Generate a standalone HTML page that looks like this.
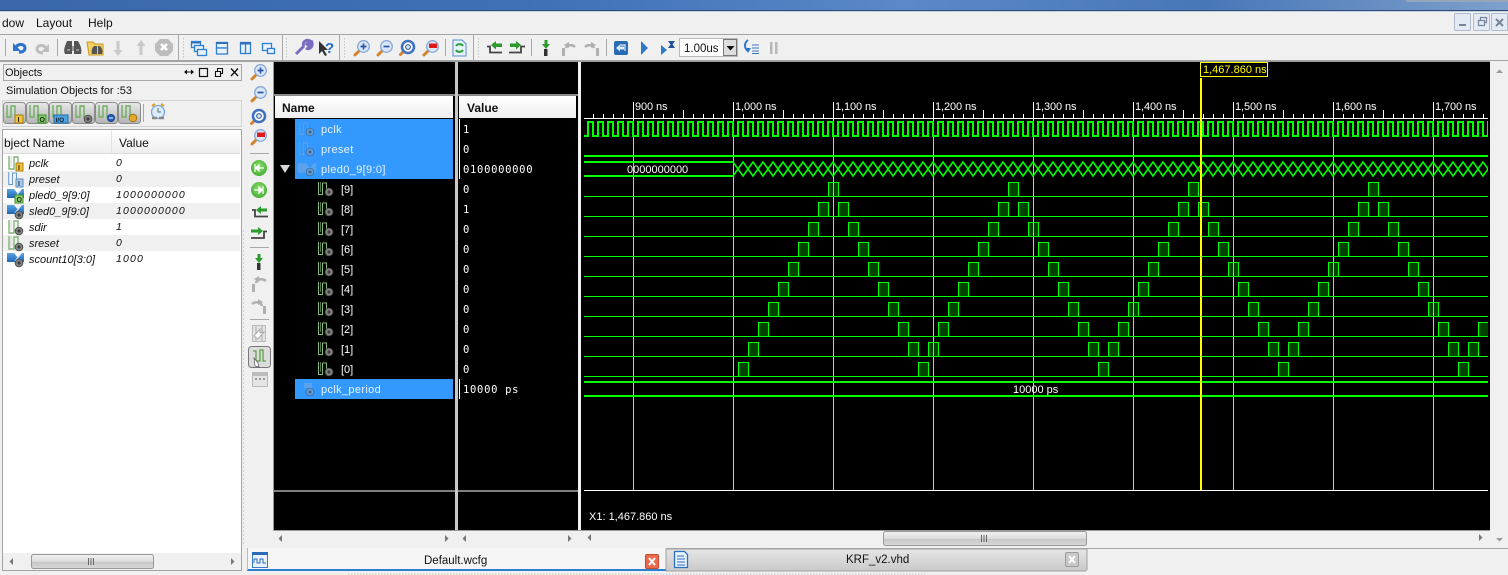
<!DOCTYPE html>
<html><head><meta charset="utf-8"><title>Default.wcfg</title>
<style>
html,body{margin:0;padding:0;background:#f0f0f0;width:1508px;height:575px;overflow:hidden}
svg{display:block;position:absolute;left:0;top:0}
text{font-family:"Liberation Sans",sans-serif;font-size:11px;white-space:pre}
.w{fill:#fff}
.rl{letter-spacing:-.1px}
.m{font-size:12px;fill:#111}
.k{fill:#111}
.nm{fill:#e8f2ff;letter-spacing:.35px}
.sub{fill:#fff}
.v{font-family:"DejaVu Sans Mono","Liberation Mono",monospace;font-size:10.5px;fill:#fff;letter-spacing:.7px}
.hd{font-weight:bold;font-size:12px;fill:#111}
.it{font-style:italic;fill:#111}
.iv{font-style:italic;font-size:10.5px;fill:#111;letter-spacing:1.15px}
.p{fill:rgba(0,255,0,.26);stroke:#0f0;stroke-width:1}
.b{stroke:#0f0;stroke-width:1;fill:none}
.t{stroke:#0f0;stroke-width:2;fill:none}
.g{fill:#c4c4c4}
.sep{stroke:#a8a8a8;stroke-width:1}
.ar{fill:#777}
</style></head><body>
<svg width="1508" height="575" viewBox="0 0 1508 575" xmlns="http://www.w3.org/2000/svg">
<defs>
<linearGradient id="tb" x1="0" x2="1" y1="0" y2="0"><stop offset="0" stop-color="#3a68aa"/><stop offset=".35" stop-color="#3f70b5"/><stop offset=".6" stop-color="#5a88c8"/><stop offset=".8" stop-color="#4877b8"/><stop offset="1" stop-color="#7da0cc"/></linearGradient>
<linearGradient id="hdr" x1="0" x2="0" y1="0" y2="1"><stop offset="0" stop-color="#fff"/><stop offset="1" stop-color="#eeeeee"/></linearGradient>
<linearGradient id="btn" x1="0" x2="0" y1="0" y2="1"><stop offset="0" stop-color="#e8e8e8"/><stop offset="1" stop-color="#b4b4b4"/></linearGradient>
<linearGradient id="thumb" x1="0" x2="0" y1="0" y2="1"><stop offset="0" stop-color="#f2f2f2"/><stop offset=".5" stop-color="#dcdcdc"/><stop offset=".55" stop-color="#c8c8c8"/><stop offset="1" stop-color="#d8d8d8"/></linearGradient>
<linearGradient id="tab2" x1="0" x2="0" y1="0" y2="1"><stop offset="0" stop-color="#e6e6e6"/><stop offset="1" stop-color="#c9c9c9"/></linearGradient>
<linearGradient id="blu" x1="0" x2="0" y1="0" y2="1"><stop offset="0" stop-color="#5aa4e4"/><stop offset="1" stop-color="#1e66b4"/></linearGradient>
<radialGradient id="gr" cx=".5" cy=".4" r=".7"><stop offset="0" stop-color="#8fe070"/><stop offset="1" stop-color="#3aa52a"/></radialGradient>
<pattern id="clk" patternUnits="userSpaceOnUse" x="585" y="119" width="10" height="20"><path d="M-1 17H3V3H8V17H11" class="t"/></pattern>
<pattern id="xx" patternUnits="userSpaceOnUse" x="733" y="160" width="10" height="18"><path d="M-1 .6L11 17.4M-1 17.4L11 .6" stroke="#0f0" stroke-width="1.600" fill="none"/></pattern>
<pattern id="tk" patternUnits="userSpaceOnUse" x="583" y="114" width="10" height="4"><rect width="1" height="4" fill="#fff"/></pattern>
<clipPath id="wc"><rect x="584" y="62" width="904" height="430"/></clipPath>

<g id="mag"><path d="M2 15L7 10" stroke="#d5842a" stroke-width="3" stroke-linecap="round"/><circle cx="10.500" cy="6.500" r="5.800" fill="#dbe7f7" stroke="#86a8d8" stroke-width="1.300"/></g>
<g id="zin"><use href="#mag"/><path d="M7.500 6.500h6M10.500 3.500v6" stroke="#2856a8" stroke-width="1.700"/></g>
<g id="zout"><use href="#mag"/><path d="M7.500 6.500h6" stroke="#2856a8" stroke-width="1.700"/></g>
<g id="zfit"><path d="M1.500 15.500L5 12" stroke="#d5842a" stroke-width="3" stroke-linecap="round"/><circle cx="9" cy="8" r="6" fill="#fff" stroke="#3f72c0" stroke-width="2.600"/><circle cx="9" cy="8" r="2.400" fill="#cfe0f5" stroke="#30568f" stroke-width="1"/></g>
<g id="zarea"><use href="#mag"/><rect x="7" y="3.500" width="8" height="4.500" fill="#e01818"/></g>

<g id="sig"><path d="M1 0V13H6V1H10V13" fill="none" stroke="#84b47a" stroke-width="1.400"/><path d="M3 0V10.500" stroke="#c4dcc0" stroke-width="1"/></g>
<g id="sigd"><path d="M.5 0V12.500H4.500V1H8.500V13H11" fill="none" stroke="#82b878" stroke-width="1"/><path d="M2.500 0V10" stroke="#4f7a48" stroke-width="1"/></g>
<g id="sigf"><path d="M.7 0V12.500H4.500V1H8.500V13H11" fill="none" stroke="#6a9bd0" stroke-width="1"/></g>
<g id="bus"><path d="M0 1H7L11 6L15 1H17V10H0Z" fill="url(#blu)"/><path d="M8 9L13 3" stroke="#cfe4f8" stroke-width="1"/></g>
<g id="busf"><path d="M0 1H8L12 6L16 1H18V11H0Z" fill="#5aa2ec"/></g>
<g id="dot"><circle cx="4" cy="4" r="3.900" fill="#808080" stroke="#444" stroke-width=".8"/><path d="M2.400 4h3.200M4 2.400v3.200" stroke="#222" stroke-width=".9"/></g>
<g id="dotf"><circle cx="4" cy="4" r="3.900" fill="#6b9ccc" stroke="#2f6aa8" stroke-width=".8"/><path d="M2.400 4h3.200M4 2.400v3.200" stroke="#1f4f80" stroke-width=".9"/></g>
<g id="bn"><rect x=".5" y=".5" width="22" height="21" rx="3" fill="url(#btn)" stroke="#8b8b8b"/><path d="M4 3V15H8V4H12V15H15" fill="none" stroke="#6fae62" stroke-width="1.400"/></g>
</defs>

<!-- title + menu -->
<rect width="1508" height="10" fill="url(#tb)"/>
<rect y="10" width="1508" height="1" fill="#2e4c74"/>
<rect y="11" width="1508" height="1" fill="#c6d2e2"/>
<rect x="1406" y="0" width="102" height="2" fill="#95a6ba"/>
<text class="m" x="2" y="27">dow</text><text class="m" x="36" y="27">Layout</text><text class="m" x="88" y="27">Help</text>
<rect y="34" width="1508" height="1" fill="#a4a4a4"/>
<g fill="#e3eaf3" stroke="#aebccb"><rect x="1454.500" y="13.500" width="16" height="17" rx="1"/><rect x="1473.500" y="13.500" width="16" height="17" rx="1"/><rect x="1491.500" y="13.500" width="16" height="17" rx="1"/></g>
<rect x="1459" y="24" width="7" height="2" fill="#76859a"/>
<path d="M1478.500 20.500h6v5h-6zM1480.500 20v-2.500h6v5h-2" fill="none" stroke="#76859a" stroke-width="1.200"/>
<path d="M1496 19l7 7M1503 19l-7 7" stroke="#76859a" stroke-width="2"/>

<!-- main toolbar -->
<rect y="60" width="1508" height="2" fill="#a4a4a4"/>
<path class="sep" d="M5.500 39V56M57.500 39V56M178.500 35V60M282.500 35V60M339.500 35V60M445.500 39V56M473.500 35V60M531.500 39V56M606.500 39V56"/>
<g stroke="#c4c4c4" stroke-dasharray="1.500 1.500"><path d="M183.500 38V58M286.500 38V58M344.500 38V58M478.500 38V58"/></g>
<!-- undo/redo -->
<path d="M13 43v8h8z" fill="#2a72cc"/><path d="M16 47C19 43 25 44 25 48C25 51 22 52.500 19 52" fill="none" stroke="#2a72cc" stroke-width="3"/>
<path d="M49 44v8h-8z" fill="#bdbdbd"/><path d="M46 48C43 44 37 45 37 49C37 52 40 53 43 53" fill="none" stroke="#bdbdbd" stroke-width="3"/>
<!-- binoculars -->
<path d="M65 54C63 50 65 46 67 41H72V54ZM74 41H78C81 46 82 50 81 54H74Z" fill="#555"/><path d="M72 46h2v5h-2z" fill="#999"/><path d="M67 50h3M76 50h3" stroke="#ccc"/>
<path d="M87 42h6l2 2h8v11H89z" fill="#f2d060" stroke="#c79a26"/><path d="M92 54C91 51 92 48 94 46H97V54ZM98 46H100C102 48 103 51 102 54H98Z" fill="#555"/>
<!-- down/up/stop -->
<path d="M116.500 41h3v9h3l-4.500 6-4.500-6h3z" fill="#c9c9c9"/>
<path d="M139.500 55h3v-9h3l-4.500-6-4.500 6h3z" fill="#c9c9c9"/>
<path d="M160 39h8l5 5v7l-5 5h-8l-5-5v-7z" fill="#bdbdbd"/><path d="M161 44l6 6M167 44l-6 6" stroke="#fff" stroke-width="2.500"/>
<!-- windows -->
<g fill="#e8f2fc" stroke="#2f7fd0" stroke-width="1.300">
<rect x="191.500" y="41.500" width="9" height="6"/><rect x="194.500" y="45.500" width="9" height="6"/><rect x="197.500" y="49.500" width="9" height="6"/>
<rect x="216.500" y="42.500" width="11" height="5.500"/><rect x="216.500" y="48" width="11" height="6"/>
<rect x="240.500" y="42.500" width="10" height="11"/><path d="M245.500 43V53"/>
<rect x="262.500" y="43.500" width="9" height="7"/><rect x="267.500" y="48.500" width="7" height="5"/></g>
<path d="M191 42h10v1.500h-10zM216 42h12v2h-12zM240 42h11v2.500h-11z" fill="#2f6fc0"/>
<!-- wrench + help -->
<path d="M296 54L304 46M304 46C302 42 306 39 310 41L307 44L309 46L312 43C313 47 309 50 306 48" fill="none" stroke="#7a6cc0" stroke-width="3"/>
<path d="M319 41V54L322 51L325 56L327 55L324 50H328Z" fill="#333"/><text x="325" y="53" style="font-size:15px;font-weight:bold;fill:#1f6ec8">?</text>
<!-- zoom -->
<use href="#zin" x="353" y="40"/><use href="#zout" x="376" y="40"/><use href="#zfit" x="399" y="39"/><use href="#zarea" x="422" y="40"/>
<!-- refresh -->
<path d="M453 40h9l4 4v12h-13z" fill="#e8f2fc" stroke="#4f8ed0"/><path d="M456 46C458 43 462 44 463 46M463 50C461 53 457 52 456 50" fill="none" stroke="#2aa03a" stroke-width="2"/>
<!-- prev/next transitions -->
<path d="M487 46.500h3v6h12" fill="none" stroke="#444" stroke-width="1.800"/><path d="M491 45l5-4v2.500h6v3.500h-6v2.500z" fill="#2c9a2c"/>
<path d="M525 46.500h-4v6H509" fill="none" stroke="#444" stroke-width="1.800"/><path d="M521 45l-5-4v2.500h-6v3.500h6v2.500z" fill="#2c9a2c"/>
<path d="M544.500 40h3v4h2.500l-4 5-4-5h2.500z" fill="#2c9a2c"/><rect x="544" y="49" width="3.500" height="7" fill="#333"/>
<rect x="562" y="48" width="3" height="8" fill="#b0b0b0"/><path d="M566 48C567 45 572 44 575 47" fill="none" stroke="#b0b0b0" stroke-width="2.500"/><path d="M569 42v6l-5-3z" fill="#b0b0b0"/>
<rect x="596" y="48" width="3" height="8" fill="#b0b0b0"/><path d="M594 48C593 45 588 44 585 47" fill="none" stroke="#b0b0b0" stroke-width="2.500"/><path d="M591 42v6l5-3z" fill="#b0b0b0"/>
<!-- run -->
<rect x="614" y="41" width="14" height="14" rx="2" fill="#2a6cb4"/><path d="M616 48l4-3.500v2h4v3h-4v2z" fill="#dce9f8"/><path d="M620 45h5v6" fill="none" stroke="#dce9f8" stroke-width="1.200"/>
<path d="M641 41l7 7-7 7z" fill="#2c78cc"/>
<path d="M661 45l6 5-6 5z" fill="#2c78cc"/><path d="M668 41h7l-2.500 3.500 2.500 3.500h-7l2.500-3.500z" fill="#234f96"/>
<rect x="679.500" y="38.500" width="58" height="18" fill="#fff" stroke="#b8b8b8"/><text x="684" y="52" style="font-size:11.500px;fill:#111">1.00us</text>
<rect x="723.500" y="39.500" width="13" height="16" fill="#dedede" stroke="#777"/><path d="M726.500 46h8l-4 4.500z" fill="#111"/>
<path d="M748 40C744 43 744 48 748 51" fill="none" stroke="#2a78cc" stroke-width="2"/><path d="M745 48h6l-3 5z" fill="#2a78cc"/><path d="M752 45h7M752 48h7M752 51h7M752 53.500h7" stroke="#3a78c0"/>
<rect x="770" y="42" width="2.500" height="12" fill="#b8b8b8"/><rect x="775" y="42" width="2.500" height="12" fill="#b8b8b8"/>

<!-- Objects panel -->
<rect x="3.500" y="64.500" width="238" height="16" fill="#f0f0f0" stroke="#a8a8a8"/>
<text class="k" x="5" y="76">Objects</text>
<path d="M185 72h8" stroke="#111" stroke-width="1"/><path d="M187 69.500l-3 2.500 3 2.500zM191 69.500l3 2.500-3 2.500z" fill="#111"/>
<rect x="199.500" y="68.500" width="8" height="8" fill="none" stroke="#111" stroke-width="1.200"/>
<path d="M215.500 71.500h5v5h-5zM217.500 71v-2.500h5v5h-2" fill="none" stroke="#111" stroke-width="1.100"/>
<path d="M231 68.500l7 7.500M238 68.500l-7 7.500" stroke="#111" stroke-width="1.300"/>
<text class="k" x="6" y="94">Simulation Objects for :53</text>
<rect x="2.500" y="100.500" width="239" height="26" fill="#f0f0f0" stroke="#d4d4d4"/>
<use href="#bn" x="3" y="102"/><use href="#bn" x="26" y="102"/><use href="#bn" x="49" y="102"/><use href="#bn" x="72" y="102"/><use href="#bn" x="95" y="102"/><use href="#bn" x="118" y="102"/>
<rect x="15" y="115" width="8" height="8" fill="#f2c23a" stroke="#a87e10"/><text x="17.500" y="122" style="font-size:7px;font-weight:bold;fill:#222">I</text>
<rect x="38" y="115" width="8" height="8" fill="#7cd05e" stroke="#3c8c2c"/><text x="39.500" y="122" style="font-size:7px;font-weight:bold;fill:#222">O</text>
<rect x="54" y="115" width="14" height="8" fill="#4ea3e0" stroke="#2268a8"/><text x="55.500" y="122" style="font-size:6.500px;font-weight:bold;fill:#123">I/O</text>
<use href="#dot" x="84" y="115"/>
<circle cx="111" cy="118" r="3.600" fill="#1d5fc0" stroke="#123e80" stroke-width=".8"/><path d="M109 118h4" stroke="#fff"/>
<circle cx="133" cy="118" r="3.800" fill="#e2a92c" stroke="#9c7010" stroke-width=".8"/>
<path class="sep" d="M143.500 104V122"/>
<circle cx="158" cy="112" r="6.500" fill="#dcecfb" stroke="#7ba7d8" stroke-width="1.300"/><path d="M158 108v4h3" stroke="#5a6a80" fill="none"/><path d="M152 106l3-2M164 106l-3-2" stroke="#e6a020" stroke-width="2"/><path d="M152 118h5M159 118h5" stroke="#888" stroke-width="2.500"/>

<rect x="2.500" y="129.500" width="239" height="441" fill="#fff" stroke="#a4a4a4"/>
<rect x="3" y="130" width="237" height="23" fill="url(#hdr)"/>
<rect x="3" y="153" width="237" height="1" fill="#dcdcdc"/><rect x="111" y="131" width="1" height="22" fill="#e2e2e2"/>
<text class="m" x="4" y="147">bject Name</text><text class="m" x="119" y="147">Value</text>
<g fill="#f0f0f0"><rect x="3" y="171" width="237" height="16"/><rect x="3" y="203" width="237" height="16"/><rect x="3" y="235" width="237" height="16"/></g>
<use href="#sig" x="8" y="156"/><rect x="16" y="163" width="7" height="8" fill="#f2c23a" stroke="#a87e10"/><text x="18" y="170" style="font-size:7px;font-weight:bold;fill:#222">I</text>
<use href="#sigf" x="8" y="172"/><rect x="16" y="179" width="7" height="8" fill="#a9cbe8" stroke="#5a8cc0"/><text x="18" y="186" style="font-size:7px;font-weight:bold;fill:#234">I</text>
<use href="#bus" x="7" y="188"/><rect x="15" y="195" width="8" height="8" fill="#8ed46c" stroke="#3c8c2c"/><text x="16.500" y="202" style="font-size:7px;font-weight:bold;fill:#222">O</text>
<use href="#bus" x="7" y="204"/><use href="#dot" x="15" y="211"/>
<use href="#sig" x="8" y="220"/><use href="#dot" x="15" y="227"/>
<use href="#sig" x="8" y="236"/><use href="#dot" x="15" y="243"/>
<use href="#bus" x="7" y="252"/><use href="#dot" x="15" y="259"/>
<text class="it" x="29" y="167">pclk</text><text class="iv" x="116" y="166">0</text>
<text class="it" x="29" y="183">preset</text><text class="iv" x="116" y="182">0</text>
<text class="it" x="29" y="199">pled0_9[9:0]</text><text class="iv" x="116" y="198">1000000000</text>
<text class="it" x="29" y="215">sled0_9[9:0]</text><text class="iv" x="116" y="214">1000000000</text>
<text class="it" x="29" y="231">sdir</text><text class="iv" x="116" y="230">1</text>
<text class="it" x="29" y="247">sreset</text><text class="iv" x="116" y="246">0</text>
<text class="it" x="29" y="263">scount10[3:0]</text><text class="iv" x="116" y="262">1000</text>
<rect x="3" y="553" width="238" height="17" fill="#f0f0f0"/>
<rect x="31.500" y="554.500" width="122" height="14" rx="2" fill="url(#thumb)" stroke="#9a9a9a"/>
<path d="M88.500 558v7M91 558v7M93.500 558v7" stroke="#666"/>
<path class="ar" d="M13 558v7l-3.500-3.500zM231 558v7l3.500-3.500z"/>

<!-- vertical toolbar -->
<path d="M243.500 230V546" stroke="#cfcfcf" stroke-dasharray="2 2"/>
<use href="#zin" x="250" y="64"/><use href="#zout" x="250" y="86"/><use href="#zfit" x="250" y="108"/><use href="#zarea" x="250" y="129"/>
<path class="sep" d="M250 153.500H269M250 247.500H269M250 319.500H269"/>
<circle cx="259" cy="168" r="8" fill="url(#gr)"/><path d="M264 168h-5M259 165l-3.500 3 3.500 3zM255 164v8" stroke="#fff" stroke-width="1.200" fill="#fff"/>
<circle cx="259" cy="190" r="8" fill="url(#gr)"/><path d="M254 190h5M259 187l3.500 3-3.500 3zM263 186v8" stroke="#fff" stroke-width="1.200" fill="#fff"/>
<path d="M252 210h3v6.500h13" fill="none" stroke="#444" stroke-width="1.800"/><path d="M256 210l5-4v2.500h6v3h-6v2.500z" fill="#2c9a2c"/>
<path d="M267 231.500h-3v6.500H251" fill="none" stroke="#444" stroke-width="1.800"/><path d="M263 231l-5-4v2.500h-7v3h7v2.500z" fill="#2c9a2c"/>
<path d="M257.500 254h3v4h2.500l-4 5-4-5h2.500z" fill="#2c9a2c"/><rect x="257" y="263" width="3.500" height="7" fill="#333"/>
<rect x="252" y="284" width="3" height="8" fill="#b0b0b0"/><path d="M256 283C257 279 262 278 266 281" fill="none" stroke="#b0b0b0" stroke-width="2.500"/><path d="M259 276v6l-5-3z" fill="#b0b0b0"/>
<rect x="263" y="306" width="3" height="8" fill="#b0b0b0"/><path d="M262 306C261 302 256 301 252 304" fill="none" stroke="#b0b0b0" stroke-width="2.500"/><path d="M258 299v6l5-3z" fill="#b0b0b0"/>
<rect x="252.500" y="325.500" width="13" height="16" fill="#e4e4e4" stroke="#bbb"/><path d="M256 326v15M262 326v15" stroke="#aaa"/><path d="M254 336l6-7v4l4-1-6 7z" fill="#fff" stroke="#aaa"/>
<rect x="248.500" y="346.500" width="22" height="21" rx="3" fill="#dcdcdc" stroke="#777"/><path d="M253 351h3v10h4v-11h3v11h3" fill="none" stroke="#5f9f4f" stroke-width="1.300"/><path d="M254 358l4 5 1 4-4-1z" fill="#fff" stroke="#555" stroke-width=".7"/>
<rect x="252.500" y="372.500" width="15" height="14" fill="#e4e4e4" stroke="#bbb"/><rect x="253" y="373" width="14" height="3" fill="#bbb"/><path d="M255 379h2M259 379h2M263 379h2" stroke="#999" stroke-width="2"/>

<!-- black panels -->
<rect x="273" y="61" width="1218" height="470" fill="#9a9a9a"/>
<rect x="274" y="62" width="181" height="468" fill="#000"/>
<rect x="455" y="62" width="3" height="468" fill="#c8c8c8"/>
<rect x="458" y="62" width="120" height="468" fill="#000"/>
<rect x="578" y="62" width="3" height="468" fill="#f0f0f0"/>
<rect x="581" y="62" width="909" height="468" fill="#000"/>
<rect x="1490" y="61" width="18" height="485" fill="#f0f0f0"/>
<rect x="274" y="94" width="181" height="2" fill="#8a8a8a"/><rect x="458" y="94" width="120" height="2" fill="#8a8a8a"/>
<rect x="275" y="96" width="178" height="22" fill="url(#hdr)"/><rect x="459" y="96" width="117" height="22" fill="url(#hdr)"/>
<text class="hd" x="282" y="112">Name</text><text class="hd" x="467" y="112">Value</text>
<rect x="274" y="490" width="181" height="2" fill="#808080"/><rect x="458" y="490" width="120" height="2" fill="#808080"/>

<!-- names -->
<rect x="295" y="119" width="158" height="60" fill="#3399ff"/><rect x="295" y="379" width="158" height="20" fill="#3399ff"/>
<path d="M280 165h10l-5 8z" fill="#d8d8d8"/>
<use href="#sigf" x="299" y="122"/><use href="#dotf" x="306" y="128"/>
<use href="#sigf" x="299" y="142"/><use href="#dotf" x="306" y="148"/>
<use href="#busf" x="298" y="162"/><use href="#dotf" x="306" y="168"/>
<use href="#dotf" x="306" y="388"/><path d="M304 383h8v5h-8z" fill="#5aa2ec"/>
<g>
<use href="#sigd" x="318" y="182"/><use href="#dot" x="325" y="188"/>
<use href="#sigd" x="318" y="202"/><use href="#dot" x="325" y="208"/>
<use href="#sigd" x="318" y="222"/><use href="#dot" x="325" y="228"/>
<use href="#sigd" x="318" y="242"/><use href="#dot" x="325" y="248"/>
<use href="#sigd" x="318" y="262"/><use href="#dot" x="325" y="268"/>
<use href="#sigd" x="318" y="282"/><use href="#dot" x="325" y="288"/>
<use href="#sigd" x="318" y="302"/><use href="#dot" x="325" y="308"/>
<use href="#sigd" x="318" y="322"/><use href="#dot" x="325" y="328"/>
<use href="#sigd" x="318" y="342"/><use href="#dot" x="325" y="348"/>
<use href="#sigd" x="318" y="362"/><use href="#dot" x="325" y="368"/>
</g>
<text class="nm" x="321" y="133">pclk</text><text class="nm" x="321" y="153">preset</text><text class="nm" x="321" y="173">pled0_9[9:0]</text>
<text class="sub" x="341" y="193">[9]</text><text class="sub" x="341" y="213">[8]</text><text class="sub" x="341" y="233">[7]</text><text class="sub" x="341" y="253">[6]</text><text class="sub" x="341" y="273">[5]</text><text class="sub" x="341" y="293">[4]</text><text class="sub" x="341" y="313">[3]</text><text class="sub" x="341" y="333">[2]</text><text class="sub" x="341" y="353">[1]</text><text class="sub" x="341" y="373">[0]</text>
<text class="nm" x="321" y="393">pclk_period</text>

<!-- values -->
<rect x="459" y="119" width="1" height="60" fill="#fff"/><rect x="459" y="379" width="1" height="20" fill="#fff"/>
<text class="v" x="463" y="133">1</text><text class="v" x="463" y="153">0</text><text class="v" x="463" y="173">0100000000</text>
<text class="v" x="463" y="193">0</text><text class="v" x="463" y="213">1</text><text class="v" x="463" y="233">0</text><text class="v" x="463" y="253">0</text><text class="v" x="463" y="273">0</text><text class="v" x="463" y="293">0</text><text class="v" x="463" y="313">0</text><text class="v" x="463" y="333">0</text><text class="v" x="463" y="353">0</text><text class="v" x="463" y="373">0</text><text class="v" x="463" y="393">10000 ps</text>

<!-- wave: ruler -->
<rect x="584" y="114" width="904" height="4" fill="url(#tk)"/>
<rect x="584" y="118" width="904" height="1" fill="#fff"/>
<g fill="#fff"><rect x="683" y="110" width="1" height="8"/><rect x="783" y="110" width="1" height="8"/><rect x="883" y="110" width="1" height="8"/><rect x="983" y="110" width="1" height="8"/><rect x="1083" y="110" width="1" height="8"/><rect x="1183" y="110" width="1" height="8"/><rect x="1283" y="110" width="1" height="8"/><rect x="1383" y="110" width="1" height="8"/></g>
<g fill="#fff"><rect x="633" y="102" width="1" height="17"/><rect x="733" y="102" width="1" height="17"/><rect x="833" y="102" width="1" height="17"/><rect x="933" y="102" width="1" height="17"/><rect x="1033" y="102" width="1" height="17"/><rect x="1133" y="102" width="1" height="17"/><rect x="1233" y="102" width="1" height="17"/><rect x="1333" y="102" width="1" height="17"/><rect x="1433" y="102" width="1" height="17"/></g>
<g class="w rl"><text x="635" y="110">900 ns</text><text x="735" y="110">1,000 ns</text><text x="835" y="110">1,100 ns</text><text x="935" y="110">1,200 ns</text><text x="1035" y="110">1,300 ns</text><text x="1135" y="110">1,400 ns</text><text x="1235" y="110">1,500 ns</text><text x="1335" y="110">1,600 ns</text><text x="1435" y="110">1,700 ns</text></g>
<!-- grid -->
<g class="g"><rect x="633" y="119" width="1" height="371"/><rect x="733" y="119" width="1" height="371"/><rect x="833" y="119" width="1" height="371"/><rect x="933" y="119" width="1" height="371"/><rect x="1033" y="119" width="1" height="371"/><rect x="1133" y="119" width="1" height="371"/><rect x="1233" y="119" width="1" height="371"/><rect x="1333" y="119" width="1" height="371"/><rect x="1433" y="119" width="1" height="371"/></g>
<!-- wave: signals -->
<g clip-path="url(#wc)">
<rect x="584" y="119" width="904" height="20" fill="url(#clk)"/>
<path class="t" d="M584 156H1488M584 162H733M584 176H733M584 382H1488M584 396H1488"/>
<rect x="733" y="160" width="755" height="18" fill="url(#xx)"/>
<path class="b" d="M584 196.500H1488M584 216.500H1488M584 236.500H1488M584 256.500H1488M584 276.500H1488M584 296.500H1488M584 316.500H1488M584 336.500H1488M584 356.500H1488M584 376.500H1488"/>
<path class="p" d="M828.500 196.500v-14h10v14m170 0v-14h10v14m170 0v-14h10v14m170 0v-14h10v14"/>
<path class="p" d="M818.500 216.500v-14h10v14m10 0v-14h10v14m150 0v-14h10v14m10 0v-14h10v14m150 0v-14h10v14m10 0v-14h10v14m150 0v-14h10v14m10 0v-14h10v14"/>
<path class="p" d="M808.500 236.500v-14h10v14m30 0v-14h10v14m130 0v-14h10v14m30 0v-14h10v14m130 0v-14h10v14m30 0v-14h10v14m130 0v-14h10v14m30 0v-14h10v14"/>
<path class="p" d="M798.500 256.500v-14h10v14m50 0v-14h10v14m110 0v-14h10v14m50 0v-14h10v14m110 0v-14h10v14m50 0v-14h10v14m110 0v-14h10v14m50 0v-14h10v14"/>
<path class="p" d="M788.500 276.500v-14h10v14m70 0v-14h10v14m90 0v-14h10v14m70 0v-14h10v14m90 0v-14h10v14m70 0v-14h10v14m90 0v-14h10v14m70 0v-14h10v14"/>
<path class="p" d="M778.500 296.500v-14h10v14m90 0v-14h10v14m70 0v-14h10v14m90 0v-14h10v14m70 0v-14h10v14m90 0v-14h10v14m70 0v-14h10v14m90 0v-14h10v14"/>
<path class="p" d="M768.500 316.500v-14h10v14m110 0v-14h10v14m50 0v-14h10v14m110 0v-14h10v14m50 0v-14h10v14m110 0v-14h10v14m50 0v-14h10v14m110 0v-14h10v14"/>
<path class="p" d="M758.500 336.500v-14h10v14m130 0v-14h10v14m30 0v-14h10v14m130 0v-14h10v14m30 0v-14h10v14m130 0v-14h10v14m30 0v-14h10v14m130 0v-14h10v14m30 0v-14h10v14"/>
<path class="p" d="M748.500 356.500v-14h10v14m150 0v-14h10v14m10 0v-14h10v14m150 0v-14h10v14m10 0v-14h10v14m150 0v-14h10v14m10 0v-14h10v14m150 0v-14h10v14m10 0v-14h10v14"/>
<path class="p" d="M738.500 376.500v-14h10v14m170 0v-14h10v14m170 0v-14h10v14m170 0v-14h10v14m170 0v-14h10v14"/>
</g>
<text class="w" x="627" y="173">0000000000</text>
<text class="w" x="1013" y="393">10000 ps</text>
<rect x="584" y="490" width="904" height="1" fill="#fff"/>
<!-- cursor -->
<rect x="1200" y="78" width="2" height="412" fill="#ff0"/>
<rect x="1200.500" y="62.500" width="67" height="14" fill="#000" stroke="#ff0"/>
<text x="1203" y="73" style="fill:#ff0">1,467.860 ns</text>
<text class="w" x="589" y="520">X1: 1,467.860 ns</text>

<!-- scroll bars under panels -->
<rect x="273" y="531" width="1217" height="15" fill="#f0f0f0"/>
<path class="ar" d="M282 535v7l-3.500-3.500zM445 535v7l3.500-3.500zM466 535v7l-3.500-3.500zM568 535v7l3.500-3.500zM591 534v7l-3.500-3.500zM1479 534v7l3.500-3.500z"/>
<rect x="883.500" y="531.500" width="203" height="14" rx="2" fill="url(#thumb)" stroke="#9a9a9a"/>
<path d="M981.500 535v7M984 535v7M986.500 535v7" stroke="#666"/>
<path d="M1496 73l3.500-3.500 3.500 3.500z" fill="#999"/><path d="M1496 538l3.500 3.500 3.500-3.500z" fill="#999"/>

<!-- tabs -->
<rect x="247" y="548" width="1261" height="1" fill="#a8a8a8"/>
<rect x="247" y="548" width="419" height="22" fill="#f5f5f5"/>
<rect x="247" y="569" width="419" height="2" fill="#2f7fd0"/>
<rect x="247" y="548" width="1" height="22" fill="#bcbcbc"/>
<rect x="252.500" y="552.500" width="15" height="15" fill="#eaf3fc" stroke="#3c7cc8"/><rect x="252" y="552" width="16" height="3" fill="#2a68b8"/><path d="M254 563v-4h3v4h3v-4h3v4h3" fill="none" stroke="#2a68b8"/>
<text x="424" y="564" style="fill:#111;font-size:11.500px">Default.wcfg</text>
<rect x="645.500" y="554.500" width="13" height="14" rx="1.500" fill="#ec6a4c" stroke="#c84a2c"/><path d="M649 558l6 7M655 558l-6 7" stroke="#fff" stroke-width="2"/>
<path d="M666 549H1087V569.500L1085 571H666Z" fill="url(#tab2)" stroke="#a0a0a0" stroke-width="1"/>
<path d="M674.500 551.500h10l3 3v13h-13z" fill="#e8f2fc" stroke="#2f6ec0" stroke-width="1.300"/><path d="M677 556h7M677 559h8M677 562h8M677 565h8" stroke="#2f6ec0"/>
<text x="846" y="563" style="fill:#111;font-size:11.500px">KRF_v2.vhd</text>
<rect x="1065.500" y="552.500" width="13" height="14" rx="1.500" fill="#c8c8c8" stroke="#9c9c9c"/><path d="M1069 556l6 7M1075 556l-6 7" stroke="#fff" stroke-width="2"/>
<path d="M348 574H925" stroke="#c8c8c8" stroke-dasharray="1.500 1.500" stroke-width="1"/>
</svg>
</body></html>
